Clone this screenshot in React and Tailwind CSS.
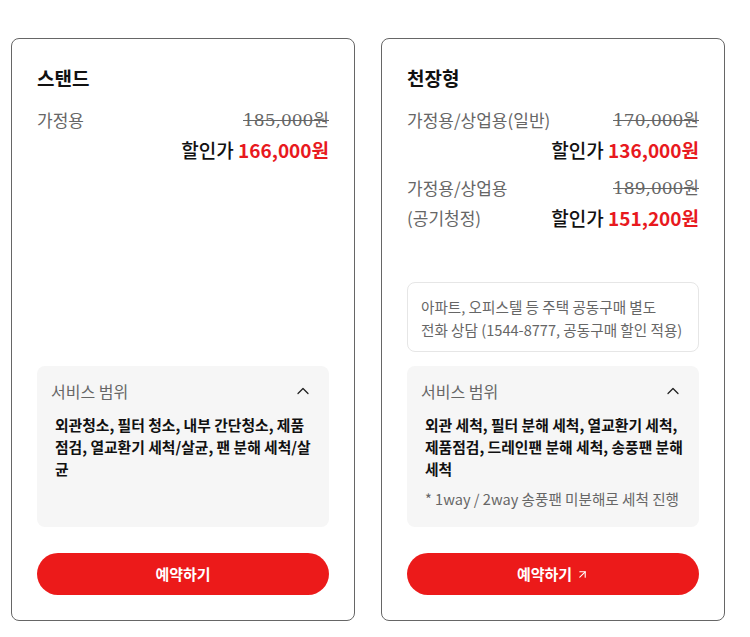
import React from "react";
import { ChevronUp, ArrowUpRight } from "lucide-react";

const plans = [
  {
    title: "스탠드",
    prices: [{ label: ["가정용"], original: "185,000원", sale: "166,000원" }],
    services: "외관청소, 필터 청소, 내부 간단청소, 제품점검, 열교환기 세척/살균, 팬 분해 세척/살균",
    link: false,
  },
  {
    title: "천장형",
    prices: [
      { label: ["가정용/상업용(일반)"], original: "170,000원", sale: "136,000원" },
      { label: ["가정용/상업용", "(공기청정)"], original: "189,000원", sale: "151,200원" },
    ],
    notice: ["아파트, 오피스텔 등 주택 공동구매 별도", "전화 상담 (1544-8777, 공동구매 할인 적용)"],
    services: "외관 세척, 필터 분해 세척, 열교환기 세척, 제품점검, 드레인팬 분해 세척, 송풍팬 분해 세척",
    note: "* 1way / 2way 송풍팬 미분해로 세척 진행",
    link: true,
  },
];

const PriceRow = ({ row }) => (
  <div className="flex justify-between">
    <div className="text-[17px] leading-[30px] text-[#666]">
      {row.label.map((l) => (
        <div key={l}>{l}</div>
      ))}
    </div>
    <div className="text-right">
      <div
        className="text-[17px] leading-[30px] text-[#666] line-through"
        style={{ fontFamily: '"DejaVu Serif", "Noto Sans CJK KR", serif' }}
      >
        {row.original}
      </div>
      <div className="text-[19px] leading-[30px] font-medium text-[#111]">
        할인가 <span className="font-bold text-[#e8191e]">{row.sale}</span>
      </div>
    </div>
  </div>
);

const PlanCard = ({ plan }) => (
  <div className="flex h-[583px] w-[344px] flex-col rounded-lg border border-[#666] bg-white p-[25px]">
    <h2 className="text-[19px] leading-[27px] font-bold text-[#111]">{plan.title}</h2>
    <div className="mt-[14px] flex flex-col gap-2">
      {plan.prices.map((row) => (
        <PriceRow key={row.original} row={row} />
      ))}
    </div>
    {plan.notice && (
      <div className="mt-auto rounded-lg border border-[#e6e6e6] px-[13px] pt-3 pb-[10px] text-[14.6px] leading-[23px] text-[#666]">
        {plan.notice.map((n) => (
          <div key={n} className="whitespace-nowrap">{n}</div>
        ))}
      </div>
    )}
    <div
      className={
        plan.notice
          ? "mt-[14px] h-[161px] rounded-lg bg-[#f6f6f6] px-[14px] pt-[13px]"
          : "mt-auto h-[161px] rounded-lg bg-[#f6f6f6] px-[14px] pt-[13px]"
      }
    >
      <div className="flex items-center justify-between">
        <span className="text-[16px] leading-6 text-[#666]">서비스 범위</span>
        <ChevronUp size={20} strokeWidth={1.5} className="mr-[2px] text-[#222]" />
      </div>
      <p className="mt-[11px] pl-1 text-[14.8px] leading-[22px] font-bold text-[#111]">{plan.services}</p>
      {plan.note && (
        <p className="mt-2 whitespace-nowrap pl-1 text-[14.6px] leading-[22px] text-[#666]">{plan.note}</p>
      )}
    </div>
    <button className="mt-[26px] flex h-[42px] w-full items-center justify-center gap-1 rounded-full bg-[#ec1a1a] text-[15px] font-bold text-white">
      예약하기
      {plan.link && <ArrowUpRight size={13} strokeWidth={2} />}
    </button>
  </div>
);

export default function App() {
  return (
    <div
      className="flex min-h-[637px] gap-[26px] bg-white pl-[11px] pt-[38px]"
      style={{ fontFamily: '"Noto Sans CJK KR", "Noto Sans", sans-serif' }}
    >
      {plans.map((p) => (
        <PlanCard key={p.title} plan={p} />
      ))}
    </div>
  );
}
